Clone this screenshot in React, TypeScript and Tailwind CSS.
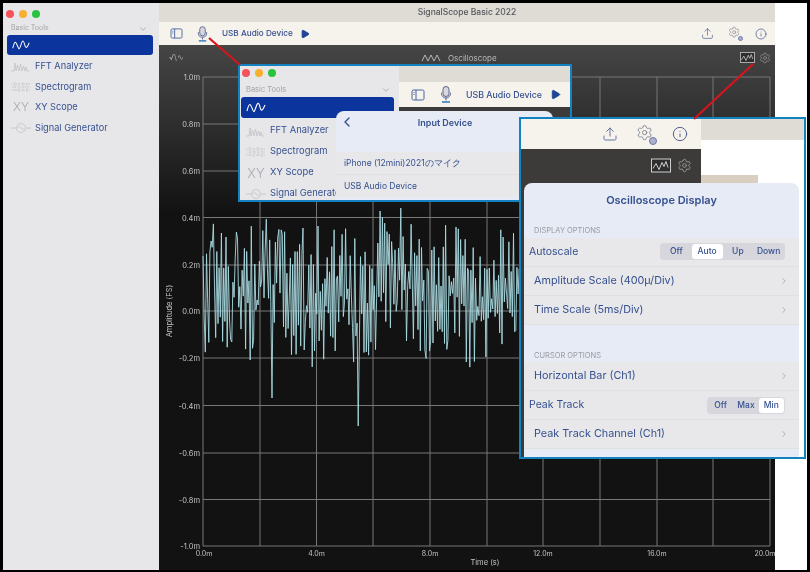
import { ChevronDown, ChevronLeft, ChevronRight, Info, Play, Settings, Upload } from "lucide-react";

const navy = "text-[#35508f]";

// seeded so the trace is the same on every load
function buildTrace() {
  let seed = 73;
  const rnd = () => {
    seed = (seed * 16807) % 2147483647;
    return seed / 2147483647;
  };
  const spikes: Record<number, number> = { 358: 426, 380: 211, 272: 398, 257: 300, 266: 219, 236: 232, 250: 360, 304: 350, 221: 233, 318: 226, 303: 228 };
  const pts: string[] = [];
  let up = false;
  for (let x = 203; x <= 770; x += 1.15) {
    const slow = Math.sin(x / 23) * 11 + Math.sin(x / 9.5 + 1) * 12;
    up = rnd() < 0.85 ? !up : up;
    const reach = 3 + Math.pow(rnd(), 1.25) * 62;
    const y = 290 + slow + (up ? -reach : reach);
    const hit = spikes[Math.round(x)];
    pts.push(`${x.toFixed(1)},${(hit ?? y).toFixed(1)}`);
  }
  return pts.join(" ");
}

const rows = [77, 124, 171, 217.5, 265, 311, 358, 405.5, 453, 499.5, 546];
const rowLabels = ["1.0m", "0.8m", "0.6m", "0.4m", "0.2m", "0.0m", "-0.2m", "-0.4m", "-0.6m", "-0.8m", "-1.0m"];
const cols = [203, 260, 316.5, 373, 430, 487, 543, 600, 657, 713, 770];

function SidebarIcon({ kind, className }: { kind: string; className: string }) {
  if (kind === "xy") return <span className={`${className} text-center font-light leading-[14px] text-[#a9a9ad]`}>XY</span>;
  return (
    <svg viewBox="0 0 20 12" className={className} fill="none" stroke={kind === "scope" ? "#ffffff" : "#c2c2c6"} strokeWidth="0.8">
      {kind === "scope" && <path d="M1 9C3 1 4 1 6 6S8 11 10 5s3-4 4 0 2 5 5-2" strokeWidth="1.1" />}
      {kind === "fft" && <path d="M0 11h3l1-8 1 8 1.5-6 1.5 6 1.5-7 1.5 7 1.5-5 1.5 5 1-4 1 4h2" />}
      {kind === "spectrum" && <path d="M0 3h20M1 6h18M0 9h20M4 1v10M8 2v9M12 1v10M16 2v9" strokeDasharray="1.5 1" />}
      {kind === "gen" && (
        <>
          <circle cx="10" cy="6" r="4.5" />
          <path d="M0 6h5M15 6h5M7 6c1-2 2-2 3 0s2 2 3 0" />
        </>
      )}
    </svg>
  );
}

function Sidebar({ large }: { large?: boolean }) {
  const tools = [
    { kind: "fft", label: "FFT Analyzer" },
    { kind: "spectrum", label: "Spectrogram" },
    { kind: "xy", label: "XY Scope" },
    { kind: "gen", label: "Signal Generator" },
  ];
  return (
    <>
      <div className={`flex items-center gap-[5px] ${large ? "h-[12px] pl-[1px]" : "h-[18px] pt-[2px] -ml-[1px]"}`}>
        <span className="size-[8px] rounded-full bg-[#f4525a]" />
        <span className="size-[8px] rounded-full bg-[#f6b02e]" />
        <span className="size-[8px] rounded-full bg-[#29c33f]" />
      </div>
      <div className={`flex items-center justify-between text-[#a3a3a8] ${large ? "mt-[6px] h-[10px] pl-[5px] pr-[3px] text-[7.5px]" : "mt-[1px] h-[11px] pl-[4px] pr-[5px] text-[7px]"}`}>
        Basic Tools
        <ChevronDown className="size-[10px]" />
      </div>
      <div className={`flex items-center rounded-[3px] bg-[#0b359c] ${large ? "mt-[2px] h-[21px] pl-[5px]" : "mt-[1px] h-[20px] pl-[4px]"}`}>
        <SidebarIcon kind="scope" className={large ? "h-[12px] w-[20px]" : "h-[11px] w-[20px]"} />
      </div>
      <div className={large ? "pt-[2px]" : "pt-[1px]"}>
        {tools.map((tool) => (
          <div key={tool.label} className={`flex items-center whitespace-nowrap ${large ? "h-[21px] gap-[4px] pl-[5px] text-[9.4px]" : "h-[20.5px] gap-[4px] pl-[4px] text-[9.2px]"} ${navy}`}>
            <SidebarIcon kind={tool.kind} className={`shrink-0 ${large ? "h-[14px] w-[20px] text-[13px]" : "h-[14px] w-[20px] text-[12px]"}`} />
            {tool.label}
          </div>
        ))}
      </div>
    </>
  );
}

function Mic({ className }: { className: string }) {
  return (
    <svg viewBox="0 0 12 18" className={className} fill="none" stroke="#59658f" strokeWidth="1">
      <rect x="3" y="1" width="6" height="10" rx="3" fill="#d8d8de" />
      <path d="M1.5 7v1a4.5 4.5 0 0 0 9 0V7M6 12.5V15" />
      <path d="M2 16.5h8" stroke="#2a78b8" strokeWidth="1.5" />
    </svg>
  );
}

function PanelIcon({ className }: { className: string }) {
  return (
    <svg viewBox="0 0 14 12" className={className} fill="none" stroke="#48659f" strokeWidth="1">
      <rect x="1" y="1" width="12" height="10" rx="1.5" />
      <path d="M5 1v10" />
      <path d="M2.5 3.5h1M2.5 5.5h1" />
    </svg>
  );
}

function GearBadge({ className }: { className: string }) {
  return (
    <span className={`relative block ${className}`}>
      <Settings className="absolute left-0 top-0 size-[82%] text-[#7d8794]" strokeWidth={1.3} />
      <span className="absolute bottom-0 right-0 size-[36%] rounded-full border border-[#6f7aa5] bg-[#aab2cc]" />
    </span>
  );
}

function ScopeIcon({ className }: { className: string }) {
  return (
    <svg viewBox="0 0 20 14" className={className} fill="none" stroke="#d0d0d0" strokeWidth="1">
      <rect x="0.5" y="0.5" width="19" height="13" fill="#2e2e2e" />
      <path d="M2 10l3-5 3 6 3-7 2 4 2-5 2 6" />
    </svg>
  );
}

function Segmented({ items, active, className }: { items: string[]; active: string; className: string }) {
  return (
    <div className={`flex h-[17px] rounded-[4px] bg-[#d6d6dc] p-[1px] text-[8.5px] font-medium ${navy} ${className}`}>
      {items.map((item) => (
        <span key={item} className={`flex flex-1 items-center justify-center rounded-[3px] ${item === active ? "bg-white" : ""}`}>
          {item}
        </span>
      ))}
    </div>
  );
}

function LinkRow({ label }: { label: string }) {
  return (
    <div className={`flex h-[29px] items-center justify-between border-b border-[#e0e0e3] pl-[10px] pr-[10px] text-[10.8px] ${navy}`}>
      {label}
      <ChevronRight className="size-[10px] text-[#a8a8ae]" />
    </div>
  );
}

function Plot() {
  return (
    <svg viewBox="159 45 616 525" className="block h-[525px] w-[616px]">
      {rows.map((y) => (
        <line key={y} x1="203" x2="770" y1={y} y2={y} stroke="#777" strokeWidth="1" />
      ))}
      {cols.map((x) => (
        <line key={x} x1={x} x2={x} y1="77" y2="546" stroke="#777" strokeWidth="1" />
      ))}
      <polyline points={buildTrace()} fill="none" stroke="#a9dbe2" strokeWidth="0.9" />
      {rows.map((y, i) => (
        <text key={y} x="200" y={y + 3} textAnchor="end" fontSize="7.5" fill="#c4c4c4">
          {rowLabels[i]}
        </text>
      ))}
      {["0.0m", "4.0m", "8.0m", "12.0m", "16.0m", "20.0m"].map((label, i) => (
        <text key={label} x={[204, 316.5, 430, 543, 657, 765][i]} y="556" textAnchor="middle" fontSize="7" fill="#c4c4c4">
          {label}
        </text>
      ))}
      <text x="485" y="565" textAnchor="middle" fontSize="7.5" fill="#c4c4c4">
        Time (s)
      </text>
      <text transform="translate(172 311) rotate(-90)" textAnchor="middle" fontSize="7.5" fill="#c4c4c4">
        Amplitude (FS)
      </text>
    </svg>
  );
}

export default function App() {
  return (
    <div className="relative h-[572px] w-[810px] overflow-hidden bg-white font-['Inter',sans-serif] blur-[0.5px]">
      <div className="flex h-full border-b-[2px] border-l-[3px] border-r-[3px] border-t-[3px] border-black">
        <aside className="h-full w-[156px] shrink-0 bg-[#e7e7ea] pl-[4px] pr-[6px] pt-[1px]">
          <Sidebar />
        </aside>

        <main className="flex h-full w-[616px] shrink-0 flex-col">
          <div className="flex h-[19px] shrink-0 items-center justify-center bg-[#dfdbd5] text-[8.5px] font-medium text-[#55565c]">
            SignalScope Basic 2022
          </div>
          <div className="flex h-[23px] shrink-0 items-center bg-[#f6f2ec] pl-[11px] pr-[8px]">
            <PanelIcon className="h-[11px] w-[13px]" />
            <Mic className="ml-[14px] h-[18px] w-[11px]" />
            <span className={`ml-[14px] whitespace-nowrap text-[8.2px] font-medium ${navy}`}>USB Audio Device</span>
            <Play className="ml-[7px] size-[10px] fill-[#1f4596] text-[#1f4596]" />
            <Upload className="ml-auto size-[13px] text-[#5a6f9c]" strokeWidth={1.4} />
            <GearBadge className="ml-[14px] size-[15px]" />
            <Info className="ml-[12px] size-[12px] text-[#52608f]" strokeWidth={1.5} />
          </div>
          <div className="relative min-h-0 flex-1 bg-[linear-gradient(#454545_0%,#333_12%,#121212_32%,#121212_100%)]">
            <div className="absolute left-[10px] top-[6px] text-[8px] text-[#aaa]">√\∿</div>
            <div className="absolute left-[262px] top-[7px] flex items-center gap-[7px] text-[8px] text-[#b8b8b8]">
              <svg viewBox="0 0 20 10" className="h-[10px] w-[20px]" fill="none" stroke="#b8b8b8">
                <path d="M1 8l3-6 3 6 3-6 3 6 3-6 3 6" />
              </svg>
              Oscilloscope
            </div>
            <ScopeIcon className="absolute left-[581px] top-[7px] h-[11px] w-[15px]" />
            <Settings className="absolute left-[600px] top-[7px] size-[12px] text-[#9a9a9a]" strokeWidth={1.3} />
            <Plot />
          </div>
        </main>
      </div>

      {/* input device callout */}
      <div className="absolute left-[238px] top-[64px] flex h-[138px] w-[334px] overflow-hidden border-2 border-[#1283c0] bg-[#e7e7ea]">
        <div className="w-[159px] shrink-0 pl-[1px] pr-[5px] pt-[1px]">
          <Sidebar large />
        </div>
        <div className="flex-1">
          <div className="h-[16px] bg-[#dfdbd5]" />
          <div className="flex h-[25px] items-center bg-[#f6f2ec] pl-[12px]">
            <PanelIcon className="h-[12px] w-[14px]" />
            <Mic className="ml-[15px] h-[21px] w-[12px]" />
            <span className={`ml-[14px] whitespace-nowrap text-[8.8px] font-medium ${navy}`}>USB Audio Device</span>
            <Play className="ml-[8px] size-[11px] fill-[#1f4596] text-[#1f4596]" />
          </div>
          <div className="h-[100px] bg-[#3d3b3a]" />
        </div>
        <div className="absolute left-[96px] top-[45px] h-[90px] w-[217px] rounded-t-[8px] bg-[#e7ebf5]">
          <div className="flex h-[41px] items-start px-[3px] pt-[3px]">
            <ChevronLeft className={`size-[16px] ${navy}`} />
            <span className={`w-[180px] pt-[2px] text-center text-[9px] font-semibold ${navy}`}>Input Device</span>
          </div>
          <div className={`flex h-[23px] items-center border-b border-[#e0e0e3] bg-[#e8e8ea] pl-[8px] text-[8.5px] ${navy}`}>
            iPhone (12mini)2021のマイク
          </div>
          <div className={`flex h-[22px] items-center bg-[#e8e8ea] pl-[8px] text-[8.5px] ${navy}`}>USB Audio Device</div>
        </div>
      </div>

      {/* oscilloscope display callout */}
      <div className="absolute left-[519px] top-[117px] flex h-[342px] w-[287px] overflow-hidden border-2 border-[#1283c0] bg-white">
        <div className="w-[180px] shrink-0">
          <div className="flex h-[30px] items-center bg-[#f6f2ec] pl-[81px]">
            <Upload className="size-[16px] text-[#5a6f9c]" strokeWidth={1.4} />
            <GearBadge className="ml-[18px] size-[21px]" />
            <Info className="ml-[15px] size-[16px] text-[#52608f]" strokeWidth={1.5} />
          </div>
          <div className="relative h-[310px] bg-[#3d3b3a]">
            <ScopeIcon className="absolute left-[130px] top-[9px] h-[15px] w-[20px]" />
            <Settings className="absolute left-[156px] top-[9px] size-[15px] text-[#a5a5a5]" strokeWidth={1.3} />
          </div>
        </div>
        <div className="flex-1">
          <div className="h-[21px] bg-[#dfdbd5]" />
          <div className="h-[35px] bg-white" />
          <div className="h-[10px] w-[57px] bg-[#d8cfc0]" />
        </div>
        <div className="absolute left-[3px] top-[64px] h-[274px] w-[275px] overflow-hidden rounded-t-[8px] bg-[#e7ebf5]">
          <div className={`pt-[9px] text-center text-[11px] font-semibold ${navy}`}>Oscilloscope Display</div>
          <div className="mt-[16px] pl-[10px] text-[7.5px] text-[#9a9aa0]">DISPLAY OPTIONS</div>
          <div className="mt-[2px] bg-[#e8e8ea]">
            <div className={`flex h-[29px] items-center justify-between border-b border-[#e0e0e3] pl-[5px] pr-[14px] text-[10.5px] ${navy}`}>
              Autoscale
              <Segmented items={["Off", "Auto", "Up", "Down"]} active="Auto" className="w-[125px]" />
            </div>
            <LinkRow label="Amplitude Scale (400µ/Div)" />
            <LinkRow label="Time Scale (5ms/Div)" />
          </div>
          <div className="mt-[25px] pl-[10px] text-[7.5px] text-[#9a9aa0]">CURSOR OPTIONS</div>
          <div className="mt-[1px] bg-[#e8e8ea]">
            <LinkRow label="Horizontal Bar (Ch1)" />
            <div className={`flex h-[29px] items-center justify-between border-b border-[#e0e0e3] pl-[5px] pr-[14px] text-[10.5px] ${navy}`}>
              Peak Track
              <Segmented items={["Off", "Max", "Min"]} active="Min" className="w-[78px]" />
            </div>
            <LinkRow label="Peak Track Channel (Ch1)" />
          </div>
        </div>
      </div>

      {/* arrows over everything */}
      <svg viewBox="0 0 810 572" className="pointer-events-none absolute left-0 top-0 h-[572px] w-[810px]">
        <path d="M209 38L240 65M753 64L694 119" stroke="#d5141c" strokeWidth="2.2" />
      </svg>
    </div>
  );
}
